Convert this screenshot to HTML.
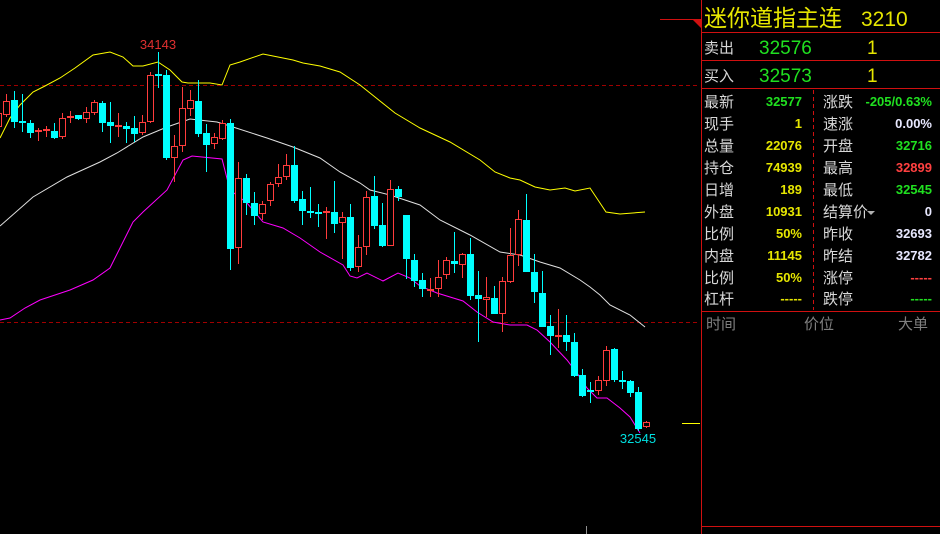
<!DOCTYPE html>
<html><head><meta charset="utf-8"><style>
html,body{margin:0;padding:0;background:#000;}
body{width:940px;height:534px;overflow:hidden;position:relative;font-family:"Liberation Sans","Noto Sans CJK SC",sans-serif;}
svg{position:absolute;left:0;top:0;}
.l{fill:#d8d8d8;font-size:15px;font-family:"Liberation Sans","Noto Sans CJK SC",sans-serif;}
.v{font-size:13px;font-weight:bold;text-anchor:end;font-family:"Liberation Sans",sans-serif;}
</style></head><body>
<svg id="s" width="940" height="534" viewBox="0 0 940 534" xmlns="http://www.w3.org/2000/svg">
<line x1="0" y1="85.5" x2="700" y2="85.5" stroke="#a00000" stroke-dasharray="4,3"/>
<line x1="0" y1="322.5" x2="700" y2="322.5" stroke="#a00000" stroke-dasharray="4,3"/>
<line x1="682" y1="423.5" x2="700" y2="423.5" stroke="#ffff00"/>
<line x1="586.5" y1="526" x2="586.5" y2="534" stroke="#909090"/>
<polyline fill="none" stroke="#ffff00" stroke-width="1" points="0,138 10,118 20,105 33,92 45,86 60,78 75,68 93,55 110,52 123,57 133,66 143,66 158,62 170,70 182,82 188,83 210,83 222,85 230,65 240,62 263,54 273,56 293,60 303,63 320,66 340,72 360,85 375,97 385,105 395,113 420,128 450,142 480,160 495,172 510,178 520,180 535,187 550,190 565,188 575,191 590,188 598,200 606,212 620,214 645,212"/>
<polyline fill="none" stroke="#e0e0e0" stroke-width="1" points="0,226 33,197 67,177 100,162 117,153 143,137 167,127 190,119 217,122 233,127 267,138 293,147 320,158 340,172 360,183 370,190 390,195 420,205 440,220 470,235 500,252 520,255 540,262 560,268 580,280 590,287 600,295 610,305 630,315 645,327"/>
<polyline fill="none" stroke="#ff00ff" stroke-width="1" points="0,320 10,318 25,308 40,300 70,290 93,280 110,268 133,222 143,212 167,190 183,160 192,156 222,159 230,190 247,203 263,222 283,228 300,238 320,252 343,265 350,276 357,278 367,273 383,281 398,273 410,278 420,286 437,293 463,301 477,312 493,322 510,325 527,325 537,330 550,342 567,360 577,373 587,388 597,398 607,398 620,408 630,417 640,433"/>
<g id="c"></g>
<text x="158" y="49" fill="#e03030" font-size="13" text-anchor="middle" font-family="Liberation Sans,sans-serif">34143</text>
<text x="638" y="443" fill="#00e0e0" font-size="13" text-anchor="middle" font-family="Liberation Sans,sans-serif">32545</text>

<line x1="660" y1="19.5" x2="701" y2="19.5" stroke="#d01010"/>
<polygon points="692,19 701,19 701,28" fill="#d01010"/>
<line x1="701.5" y1="0" x2="701.5" y2="534" stroke="#d01010"/>
<line x1="701" y1="32.5" x2="940" y2="32.5" stroke="#d01010"/>
<line x1="701" y1="60.5" x2="940" y2="60.5" stroke="#d01010"/>
<line x1="701" y1="88.5" x2="940" y2="88.5" stroke="#d01010"/>
<line x1="701" y1="311.5" x2="940" y2="311.5" stroke="#d01010"/>
<line x1="701" y1="526.5" x2="940" y2="526.5" stroke="#d01010"/>
<line x1="813.5" y1="90" x2="813.5" y2="310" stroke="#d01010" stroke-dasharray="4,3"/>
<text x="704" y="26" fill="#e6e600" font-size="23" font-family="Liberation Sans,Noto Sans CJK SC,sans-serif">迷你道指主连</text>
<text x="861" y="26" fill="#e6e600" font-size="21" font-family="Liberation Sans,sans-serif">3210</text>
<text class="l" x="704" y="53">卖出</text>
<text x="759" y="54" fill="#20e020" font-size="19" font-family="Liberation Sans,sans-serif">32576</text>
<text x="867" y="54" fill="#e6e600" font-size="19" font-family="Liberation Sans,sans-serif">1</text>
<text class="l" x="704" y="81">买入</text>
<text x="759" y="82" fill="#20e020" font-size="19" font-family="Liberation Sans,sans-serif">32573</text>
<text x="867" y="82" fill="#e6e600" font-size="19" font-family="Liberation Sans,sans-serif">1</text>

<text class="l" x="704" y="107">最新</text><text class="v" x="802" y="106" fill="#20e020">32577</text>
<text class="l" x="823" y="107">涨跌</text><text class="v" x="932" y="106" fill="#20e020">-205/0.63%</text>
<text class="l" x="704" y="129">现手</text><text class="v" x="802" y="128" fill="#e6e600">1</text>
<text class="l" x="823" y="129">速涨</text><text class="v" x="932" y="128" fill="#e8e8ff">0.00%</text>
<text class="l" x="704" y="151">总量</text><text class="v" x="802" y="150" fill="#e6e600">22076</text>
<text class="l" x="823" y="151">开盘</text><text class="v" x="932" y="150" fill="#20e020">32716</text>
<text class="l" x="704" y="173">持仓</text><text class="v" x="802" y="172" fill="#e6e600">74939</text>
<text class="l" x="823" y="173">最高</text><text class="v" x="932" y="172" fill="#ff4040">32899</text>
<text class="l" x="704" y="195">日增</text><text class="v" x="802" y="194" fill="#e6e600">189</text>
<text class="l" x="823" y="195">最低</text><text class="v" x="932" y="194" fill="#20e020">32545</text>
<text class="l" x="704" y="217">外盘</text><text class="v" x="802" y="216" fill="#e6e600">10931</text>
<text class="l" x="823" y="217">结算价</text><polygon points="867,211 875,211 871,215" fill="#b0b0b0"/><text class="v" x="932" y="216" fill="#e8e8ff">0</text>
<text class="l" x="704" y="239">比例</text><text class="v" x="802" y="238" fill="#e6e600">50%</text>
<text class="l" x="823" y="239">昨收</text><text class="v" x="932" y="238" fill="#e8e8ff">32693</text>
<text class="l" x="704" y="261">内盘</text><text class="v" x="802" y="260" fill="#e6e600">11145</text>
<text class="l" x="823" y="261">昨结</text><text class="v" x="932" y="260" fill="#e8e8ff">32782</text>
<text class="l" x="704" y="283">比例</text><text class="v" x="802" y="282" fill="#e6e600">50%</text>
<text class="l" x="823" y="283">涨停</text><text class="v" x="932" y="282" fill="#ff4040" font-weight="normal">-----</text>
<text class="l" x="704" y="304">杠杆</text><text class="v" x="802" y="303" fill="#e6e600" font-weight="normal">-----</text>
<text class="l" x="823" y="304">跌停</text><text class="v" x="932" y="303" fill="#20e020" font-weight="normal">-----</text>
<text x="706" y="329" fill="#808080" font-size="15">时间</text>
<text x="804" y="329" fill="#808080" font-size="15">价位</text>
<text x="898" y="329" fill="#808080" font-size="15">大单</text>
</svg>
<script>
var d=[[-1,'r',113,127,108,130],[0,'r',101,115,94,117],[1,'c',100,122,91,128],[2,'c',121,123,94,132],[3,'c',123,133,120,138],[4,'r',130,132,128,141],[5,'r',129,131,126,137],[6,'c',131,138,123,139],[7,'r',118,137,113,139],[8,'r',116,118,111,123],[9,'c',115,119,115,120],[10,'r',112,119,107,123],[11,'r',102,113,100,115],[12,'c',103,123,101,132],[13,'c',122,126,102,143],[14,'r',125,127,113,137],[15,'c',126,129,122,143],[16,'c',128,134,116,142],[17,'r',122,133,115,135],[18,'r',75,122,72,123],[19,'c',74,76,52,88],[20,'c',75,158,70,160],[21,'r',146,158,135,182],[22,'r',108,146,87,152],[23,'r',100,109,90,116],[24,'c',101,134,80,137],[25,'c',133,145,124,172],[26,'r',137,144,133,149],[27,'r',123,139,120,140],[28,'c',123,249,119,270],[29,'r',178,248,162,264],[30,'c',178,203,174,215],[31,'c',203,216,192,225],[32,'r',204,214,201,220],[33,'r',184,201,182,206],[34,'r',177,184,164,187],[35,'r',165,177,154,180],[36,'c',165,201,146,203],[37,'c',199,211,191,225],[38,'c',211,213,187,218],[39,'c',212,214,204,227],[40,'r',211,213,207,239],[41,'c',212,224,181,233],[42,'r',217,223,212,259],[43,'c',217,268,204,271],[44,'r',247,267,235,272],[45,'r',197,247,191,255],[46,'c',196,226,176,229],[47,'c',225,246,203,247],[48,'r',189,246,180,246],[49,'c',189,197,186,201],[50,'c',215,259,215,279],[51,'c',260,281,254,287],[52,'c',280,289,273,297],[53,'r',289,291,278,297],[54,'r',277,289,260,297],[55,'r',260,275,257,279],[56,'c',261,264,232,273],[57,'r',254,265,253,278],[58,'c',254,296,238,300],[59,'c',295,299,271,342],[60,'r',297,300,277,317],[61,'c',298,314,286,314],[62,'r',281,314,277,332],[63,'r',255,282,228,283],[64,'r',219,255,210,266],[65,'c',220,272,194,272],[66,'c',272,292,254,303],[67,'c',293,327,271,327],[68,'c',326,336,315,355],[69,'r',335,337,309,348],[70,'c',335,342,315,351],[71,'c',342,376,333,377],[72,'c',375,396,369,397],[73,'c',390,392,382,403],[74,'r',380,391,376,395],[75,'r',350,381,346,386],[76,'c',349,380,348,382],[77,'c',380,382,371,389],[78,'c',381,393,380,397],[79,'c',392,429,387,431],[80,'r',422,427,421,428]];
var g=document.getElementById('c'),h='';
d.forEach(function(a){var x=6+8*a[0],col=a[1]=='r'?'#ff3c3c':'#00ffff',t=a[2],b=a[3];
h+='<line x1="'+(x+.5)+'" y1="'+a[4]+'" x2="'+(x+.5)+'" y2="'+a[5]+'" stroke="'+col+'"/>';
if(b-t<=2){h+='<rect x="'+(x-3)+'" y="'+t+'" width="7" height="2" fill="'+col+'"/>';}
else if(a[1]=='r'){h+='<rect x="'+(x-2.5)+'" y="'+(t+.5)+'" width="6" height="'+(b-t-1)+'" fill="#000" stroke="'+col+'"/>';}
else{h+='<rect x="'+(x-3)+'" y="'+t+'" width="7" height="'+(b-t)+'" fill="'+col+'"/>';}
});
g.innerHTML=h;
</script>
</body></html>
